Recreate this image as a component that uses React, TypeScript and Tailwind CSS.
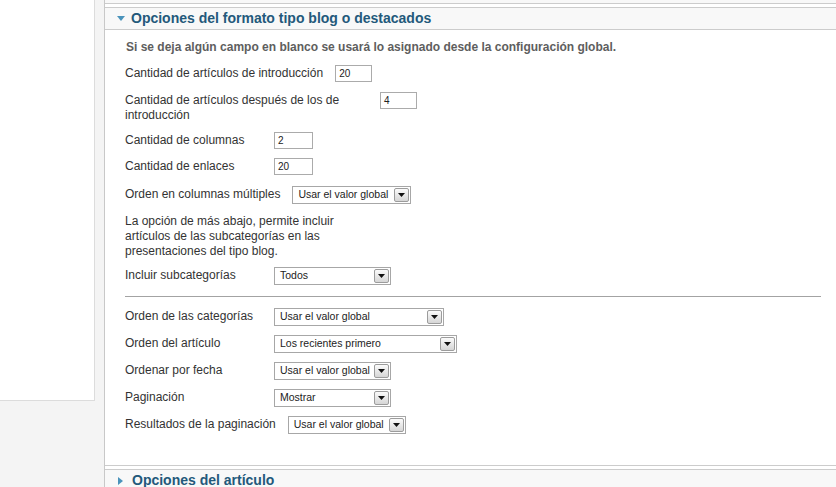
const font = { fontFamily: '"Liberation Sans", Arial, sans-serif' };

const Arrow = () => (
  <span className="w-[15px] h-[14px] flex items-center justify-center border border-[#9c9c9c] rounded-[2px] bg-linear-to-b from-[#fbfbfb] to-[#d6d6d6]">
    <svg width="7" height="4" viewBox="0 0 7 4">
      <path d="M0 0h7L3.5 4z" fill="#111" />
    </svg>
  </span>
);

const Select = ({ value, w }: { value: string; w: string }) => (
  <div
    className={`${w} h-[18px] shrink-0 flex items-center justify-between border border-[#a7a7a7] bg-white pl-[5px] pr-[1px] text-[10.5px] text-[#222]`}
  >
    <span>{value}</span>
    <Arrow />
  </div>
);

const TextBox = ({ value, w }: { value: string; w: string }) => (
  <div className={`${w} h-[17px] shrink-0 flex items-center border border-[#ababab] bg-white pl-[3px] text-[10px] text-[#222]`}>
    {value}
  </div>
);

const Label = ({ children }: { children: React.ReactNode }) => (
  <label className="min-w-[149px] max-w-[255px] pr-[12px] pt-[1px] leading-[15px] text-[12px] text-[#333]">
    {children}
  </label>
);

const Row = ({ label, mt, children }: { label: string; mt: string; children: React.ReactNode }) => (
  <div className={`${mt} flex items-start`}>
    <Label>{label}</Label>
    {children}
  </div>
);

const PanelHeader = ({ title, open }: { title: string; open: boolean }) => (
  <div className="h-[21px] flex items-center pl-[12px] bg-[#f8f8f8]">
    {open ? (
      <svg width="8" height="5" viewBox="0 0 8 5" className="mr-[6px]">
        <path d="M0 0h8L4 5z" fill="#4a93bb" />
      </svg>
    ) : (
      <svg width="5" height="8" viewBox="0 0 5 8" className="mr-[9px] ml-[1px]">
        <path d="M0 0l5 4-5 4z" fill="#4a93bb" />
      </svg>
    )}
    <span className="text-[14px] font-bold text-[#23597b]">{title}</span>
  </div>
);

export default function App() {
  return (
    <div className="w-[836px] h-[487px] overflow-hidden flex bg-[#f4f4f4]" style={font}>
      <div className="w-[104px] shrink-0">
        <div className="w-[95px] h-[401px] bg-white border-r border-b border-[#dcdcdc]" />
      </div>

      <div className="flex-1 bg-white border-l border-[#c8c8c8]">
        <div className="h-[4px] bg-[#f8f8f8] border-b border-[#cccccc]" />

        <div className="mt-[3px] border-y border-[#cccccc]">
          <div className="border-b border-[#cccccc]">
            <PanelHeader title="Opciones del formato tipo blog o destacados" open />
          </div>

          <div className="pl-[20px] pr-[15px] pt-[10px] pb-[31px] flex flex-col">
            <p className="leading-[15px] text-[12px] font-bold text-[#5e5e5e] pl-[1px]">
              Si se deja algún campo en blanco se usará lo asignado desde la configuración global.
            </p>

            <Row label="Cantidad de artículos de introducción" mt="mt-[10px]">
              <TextBox value="20" w="w-[37px]" />
            </Row>
            <Row label="Cantidad de artículos después de los de introducción" mt="mt-[10px]">
              <TextBox value="4" w="w-[37px]" />
            </Row>
            <Row label="Cantidad de columnas" mt="mt-[9px]">
              <TextBox value="2" w="w-[39px]" />
            </Row>
            <Row label="Cantidad de enlaces" mt="mt-[9px]">
              <TextBox value="20" w="w-[39px]" />
            </Row>
            <Row label="Orden en columnas múltiples" mt="mt-[11px]">
              <Select value="Usar el valor global" w="w-[119px]" />
            </Row>

            <p className="mt-[10px] w-[243px] leading-[15px] text-[12px] text-[#333]">
              La opción de más abajo, permite incluir artículos de las subcategorías en las presentaciones del tipo blog.
            </p>

            <Row label="Incluir subcategorías" mt="mt-[8px]">
              <Select value="Todos" w="w-[117px]" />
            </Row>

            <hr className="mt-[11px] border-0 border-t border-[#a3a3a3]" />

            <Row label="Orden de las categorías" mt="mt-[11px]">
              <Select value="Usar el valor global" w="w-[170px]" />
            </Row>
            <Row label="Orden del artículo" mt="mt-[9px]">
              <Select value="Los recientes primero" w="w-[183px]" />
            </Row>
            <Row label="Ordenar por fecha" mt="mt-[9px]">
              <Select value="Usar el valor global" w="w-[117px]" />
            </Row>
            <Row label="Paginación" mt="mt-[9px]">
              <Select value="Mostrar" w="w-[117px]" />
            </Row>
            <Row label="Resultados de la paginación" mt="mt-[9px]">
              <Select value="Usar el valor global" w="w-[118px]" />
            </Row>
          </div>
        </div>

        <div className="mt-[3px] border-t border-[#cccccc]">
          <PanelHeader title="Opciones del artículo" open={false} />
        </div>
      </div>
    </div>
  );
}
